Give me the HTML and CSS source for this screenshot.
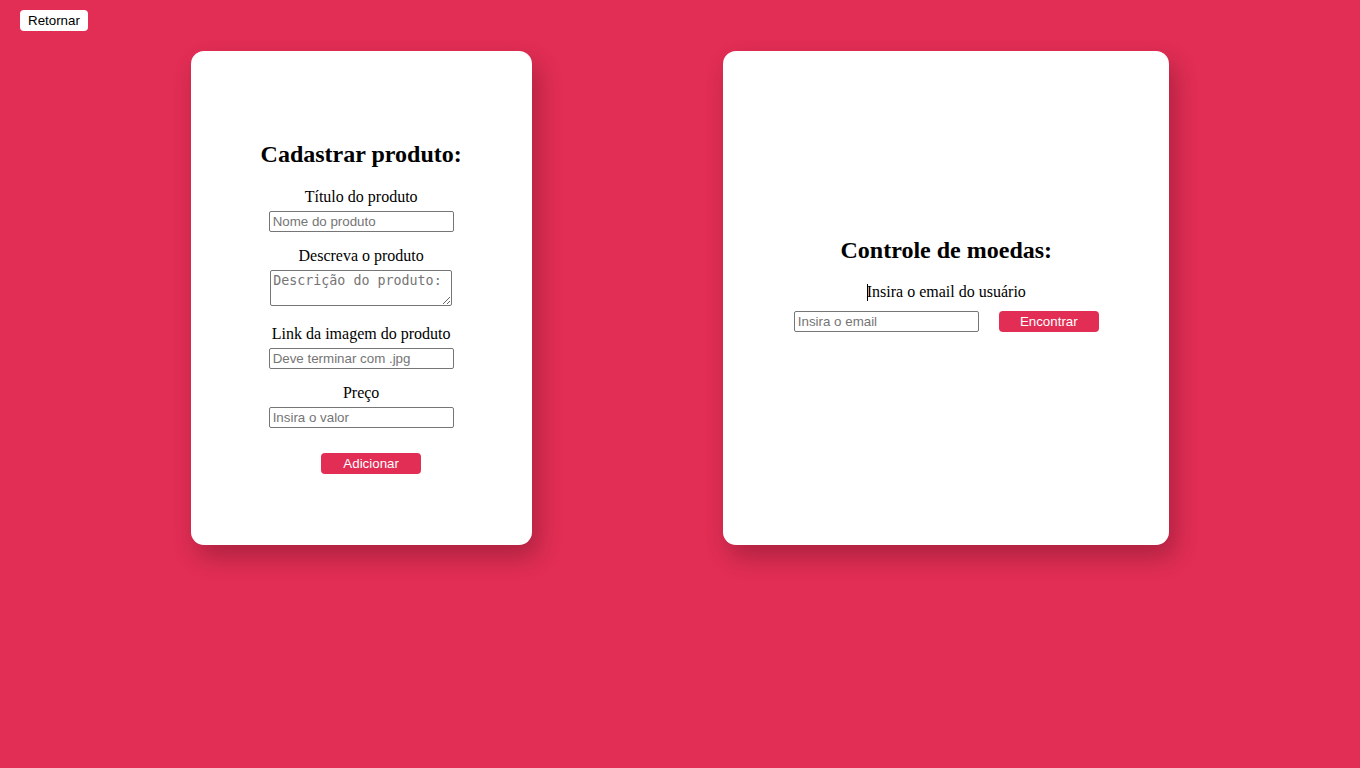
FILE: index.html
```html
<!DOCTYPE html>
<html lang="pt-BR">
<head>
<meta charset="utf-8">
<title>Admin</title>
<link rel="stylesheet" href="styles.css">
</head>
<body>
<header class="topbar">
  <button class="back-btn" type="button">Retornar</button>
</header>
<main class="panels">
  <section class="card card-product">
    <h2 class="card-title">Cadastrar produto:</h2>
    <label class="field-label first" for="titulo">Título do produto</label>
    <input class="field-input" id="titulo" type="text" placeholder="Nome do produto">
    <label class="field-label" for="descricao">Descreva o produto</label>
    <textarea class="field-textarea" id="descricao" placeholder="Descrição do produto:"></textarea>
    <label class="field-label after-textarea" for="imagem">Link da imagem do produto</label>
    <input class="field-input" id="imagem" type="text" placeholder="Deve terminar com .jpg">
    <label class="field-label" for="preco">Preço</label>
    <input class="field-input" id="preco" type="text" placeholder="Insira o valor">
    <button class="action-btn add-btn" type="button">Adicionar</button>
  </section>
  <section class="card card-coins">
    <h2 class="card-title">Controle de moedas:</h2>
    <label class="field-label first" for="email"><span class="caret"></span>Insira o email do usuário</label>
    <div class="search-row">
      <input class="field-input" id="email" type="text" placeholder="Insira o email">
      <button class="action-btn" type="button">Encontrar</button>
    </div>
  </section>
</main>
</body>
</html>
```
FILE: styles.css
```css
html, body {
  margin: 0;
  padding: 0;
}

body {
  background: #e22d54;
  font-family: "Liberation Serif", "Times New Roman", serif;
  color: #000;
  min-height: 768px;
}

.topbar {
  padding: 10px 20px 0;
  display: flex;
}

.back-btn {
  height: 21px;
  padding: 0 8px;
  border: none;
  border-radius: 4px;
  background: #fff;
  color: #000;
  font: 13.33px "Liberation Sans", Arial, sans-serif;
  line-height: 21px;
}

.panels {
  margin-top: 20px;
  display: flex;
  justify-content: space-evenly;
  align-items: flex-start;
}

.card {
  box-sizing: border-box;
  height: 494px;
  background: #fff;
  border-radius: 13px;
  box-shadow: 6px 12px 24px rgba(0, 0, 0, 0.24);
  display: flex;
  flex-direction: column;
  align-items: center;
}

.card-product {
  width: 341px;
  padding-top: 70px;
}

.card-coins {
  width: 446px;
  padding-top: 166px;
  margin-left: 1px;
}

.card-title {
  margin: 20px 0 19px;
  font-size: 24px;
  line-height: 27px;
  font-weight: bold;
  text-align: center;
}

.field-label {
  display: block;
  font-size: 16px;
  line-height: 18px;
  margin-top: 14px;
  text-align: center;
}

.card-product .field-label {
  padding-top: 2px;
  line-height: 16px;
}

.field-label.first {
  margin-top: 0;
}

.field-label.after-textarea {
  margin-top: 18px;
}

.caret {
  display: inline-block;
  width: 0;
  height: 17px;
  border-left: 1px solid #000;
  margin-right: -1px;
  vertical-align: -4px;
}

.field-input {
  box-sizing: border-box;
  width: 185px;
  height: 21px;
  margin: 6px 0 0;
  padding: 1px 3px;
  border: 1px solid #767676;
  border-radius: 2px;
  background: #fff;
  font: 13.33px "Liberation Sans", Arial, sans-serif;
  color: #000;
}

.field-textarea {
  box-sizing: border-box;
  width: 182px;
  height: 36px;
  margin: 6px 0 0;
  padding: 2px;
  border: 1px solid #767676;
  border-radius: 2px;
  font: 13.33px "DejaVu Sans Mono", monospace;
  resize: both;
}

.field-input::placeholder,
.field-textarea::placeholder {
  color: #757575;
}

.action-btn {
  box-sizing: border-box;
  width: 100px;
  height: 21px;
  padding: 0;
  border: none;
  border-radius: 4px;
  background: #e22d54;
  color: #fff;
  font: 13.33px "Liberation Sans", Arial, sans-serif;
  line-height: 21px;
}

.add-btn {
  margin: 25px 0 0 20px;
}

.search-row {
  display: flex;
  align-items: flex-start;
  gap: 20px;
  margin-top: 10px;
}

.search-row .field-input {
  margin-top: 0;
}
```
